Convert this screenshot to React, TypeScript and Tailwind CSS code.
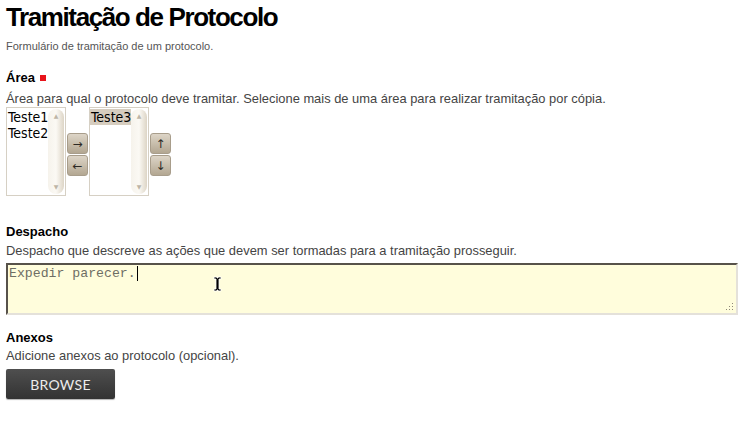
import React from "react";

function ListBox({ items, selected }: { items: string[]; selected?: string }) {
    return (
        <div className="flex h-[89px] w-[60px] border border-[#d6d0c4] bg-white">
            <div className="flex-1 overflow-hidden pt-px">
                {items.map((item) => (
                    <div
                        key={item}
                        className={`h-4 pl-px text-[14px] leading-4 text-black [font-stretch:condensed] ${item === selected ? "bg-[#d6cdbf] text-[#333]" : ""}`}
                    >
                        {item}
                    </div>
                ))}
            </div>
            <div className="my-px mr-px flex w-4 flex-col items-center justify-between rounded-full bg-gradient-to-r from-[#f6f3ec] via-[#fbf9f4] to-[#ddd5c6] py-1 text-[6px] leading-none text-[#bdb5a6]">
                <span>▲</span>
                <span>▼</span>
            </div>
        </div>
    );
}

function ArrowButton({ label }: { label: string }) {
    return (
        <button
            type="button"
            className="flex h-[21px] w-[21px] items-center justify-center rounded-[3px] border border-[#a89d8b] bg-gradient-to-b from-[#ddd5c7] to-[#b3a792] text-[12px] leading-none text-[#2d2a25]"
        >
            {label}
        </button>
    );
}

export default function App() {
    return (
        <div className="min-h-[443px] w-[745px] bg-white px-[6px] font-['Liberation_Sans',Arial,sans-serif]">
            {/* Header */}
            <h1 className="pt-[2px] text-[26px] font-bold leading-[30px] tracking-[-1.4px] text-black">
                Tramitação de Protocolo
            </h1>
            <p className="mt-[8px] text-[11px] leading-[13px] text-[#555]">
                Formulário de tramitação de um protocolo.
            </p>

            {/* Área */}
            <div className="mt-[17px] flex items-center gap-[5px] text-[13px] font-bold leading-[15px] text-black">
                Área
                <span className="inline-block h-[6px] w-[6px] bg-[#e8141b]" />
            </div>
            <p className="mt-[6px] text-[12.9px] leading-[15px] text-[#444]">
                Área para qual o protocolo deve tramitar. Selecione mais de uma área para realizar tramitação por cópia.
            </p>
            <div className="mt-px flex items-start font-['DejaVu_Sans',sans-serif]">
                <ListBox items={["Teste1", "Teste2"]} />
                <div className="ml-px mt-[26px] flex flex-col gap-px">
                    <ArrowButton label="→" />
                    <ArrowButton label="←" />
                </div>
                <div className="ml-px">
                    <ListBox items={["Teste3"]} selected="Teste3" />
                </div>
                <div className="ml-px mt-[26px] flex flex-col gap-px">
                    <ArrowButton label="↑" />
                    <ArrowButton label="↓" />
                </div>
            </div>

            {/* Despacho */}
            <div className="mt-[28px] text-[13px] font-bold leading-[15px] text-black">Despacho</div>
            <p className="mt-[4px] text-[12.9px] leading-[15px] text-[#444]">
                Despacho que descreve as ações que devem ser tormadas para a tramitação prosseguir.
            </p>
            <div className="relative mt-[5px] h-[52px] w-[732px] border-t-[2px] border-l-[2px] border-b-[2px] border-r-[2px] border-t-[#57524a] border-l-[#57524a] border-b-[#e4e1da] border-r-[#e4e1da] bg-[#fffddc] px-[1px] pt-[1px]">
                <div className="flex items-center font-['Liberation_Mono',monospace] text-[13.2px] leading-[15px] text-[#6e6e64]">
                    Expedir parecer.
                    <span className="ml-px h-[15px] w-px bg-black" />
                </div>
                {/* mouse I-beam cursor */}
                <svg className="absolute top-[11px] left-[205px]" width="9" height="16" viewBox="0 0 9 16">
                    <path d="M1 1h3v1h1V1h3v2H6v10h2v2H5v-1H4v1H1v-2h2V3H1z" fill="#000" stroke="#fff" strokeWidth="0.8" />
                </svg>
                {/* resize grip */}
                <svg className="absolute right-[2px] bottom-[2px]" width="9" height="9" viewBox="0 0 9 9">
                    <g fill="#8d8778">
                        <rect x="7" y="1" width="1" height="1" />
                        <rect x="4" y="4" width="1" height="1" />
                        <rect x="7" y="4" width="1" height="1" />
                        <rect x="1" y="7" width="1" height="1" />
                        <rect x="4" y="7" width="1" height="1" />
                        <rect x="7" y="7" width="1" height="1" />
                    </g>
                </svg>
            </div>

            {/* Anexos */}
            <div className="mt-[15px] text-[13px] font-bold leading-[15px] text-black">Anexos</div>
            <p className="mt-[3px] text-[12.9px] leading-[15px] text-[#444]">
                Adicione anexos ao protocolo (opcional).
            </p>
            <button
                type="button"
                className="mt-[6px] flex h-[30px] w-[109px] items-center justify-center rounded-[2px] bg-gradient-to-b from-[#4f4f4f] to-[#333] font-['Lato',sans-serif] text-[14px] tracking-[0.3px] text-[#ececec] shadow-[0_1px_1px_rgba(0,0,0,0.3)]"
            >
                BROWSE
            </button>
        </div>
    );
}
